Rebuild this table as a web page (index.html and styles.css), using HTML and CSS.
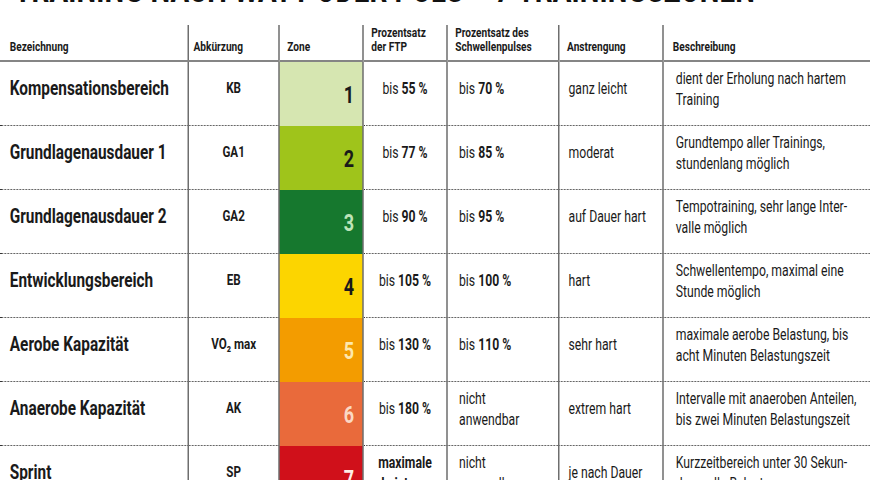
FILE: index.html
```html
<!DOCTYPE html>
<html lang="de">
<head>
<meta charset="utf-8">
<title>Trainingszonen</title>
<link rel="stylesheet" href="styles.css">
</head>
<body>
<div class="sheet">
<h1 class="title">TRAINING NACH WATT ODER PULS – 7 TRAININGSZONEN</h1>
<table class="zones">
  <colgroup>
    <col class="c-name"><col class="c-abbr"><col class="c-zone"><col class="c-ftp"><col class="c-puls"><col class="c-effort"><col class="c-desc">
  </colgroup>
  <thead>
    <tr>
      <th class="h-name">Bezeichnung</th>
      <th class="h-abbr">Abkürzung</th>
      <th>Zone</th>
      <th>Prozentsatz<br>der FTP</th>
      <th>Prozentsatz des<br>Schwellenpulses</th>
      <th>Anstrengung</th>
      <th class="h-desc">Beschreibung</th>
    </tr>
  </thead>
  <tbody>
    <tr>
      <td class="name">Kompensationsbereich</td>
      <td class="abbr">KB</td>
      <td class="zone z1">1</td>
      <td class="ftp">bis <b>55 %</b></td>
      <td class="puls">bis <b>70 %</b></td>
      <td class="effort">ganz leicht</td>
      <td class="desc">dient der Erholung nach hartem<br>Training</td>
    </tr>
    <tr>
      <td class="name">Grundlagenausdauer 1</td>
      <td class="abbr">GA1</td>
      <td class="zone z2">2</td>
      <td class="ftp">bis <b>77 %</b></td>
      <td class="puls">bis <b>85 %</b></td>
      <td class="effort">moderat</td>
      <td class="desc">Grundtempo aller Trainings,<br>stundenlang möglich</td>
    </tr>
    <tr>
      <td class="name">Grundlagenausdauer 2</td>
      <td class="abbr">GA2</td>
      <td class="zone z3">3</td>
      <td class="ftp">bis <b>90 %</b></td>
      <td class="puls">bis <b>95 %</b></td>
      <td class="effort">auf Dauer hart</td>
      <td class="desc">Tempotraining, sehr lange Inter-<br>valle möglich</td>
    </tr>
    <tr>
      <td class="name">Entwicklungsbereich</td>
      <td class="abbr">EB</td>
      <td class="zone z4">4</td>
      <td class="ftp">bis <b>105 %</b></td>
      <td class="puls">bis <b>100 %</b></td>
      <td class="effort">hart</td>
      <td class="desc">Schwellentempo, maximal eine<br>Stunde möglich</td>
    </tr>
    <tr>
      <td class="name">Aerobe Kapazität</td>
      <td class="abbr">VO₂ max</td>
      <td class="zone z5">5</td>
      <td class="ftp">bis <b>130 %</b></td>
      <td class="puls">bis <b>110 %</b></td>
      <td class="effort">sehr hart</td>
      <td class="desc">maximale aerobe Belastung, bis<br>acht Minuten Belastungszeit</td>
    </tr>
    <tr>
      <td class="name">Anaerobe Kapazität</td>
      <td class="abbr">AK</td>
      <td class="zone z6">6</td>
      <td class="ftp">bis <b>180 %</b></td>
      <td class="puls">nicht<br>anwendbar</td>
      <td class="effort">extrem hart</td>
      <td class="desc">Intervalle mit anaeroben Anteilen,<br>bis zwei Minuten Belastungszeit</td>
    </tr>
    <tr>
      <td class="name">Sprint</td>
      <td class="abbr">SP</td>
      <td class="zone z7">7</td>
      <td class="ftp"><b>maximale</b><br><b>Leistung</b></td>
      <td class="puls">nicht<br>anwendbar</td>
      <td class="effort">je nach Dauer</td>
      <td class="desc">Kurzzeitbereich unter 30 Sekun-<br>den, volle Belastung</td>
    </tr>
  </tbody>
</table>
</div>
</body>
</html>
```

FILE: styles.css
```css
html, body {
  margin: 0;
  padding: 0;
  background: #ffffff;
}

body {
  font-family: Roboto, "Liberation Sans", sans-serif;
  color: #1a1a1a;
  overflow: hidden;
  width: 880px;
  height: 480px;
}

/* the print original uses a condensed face: the whole sheet is laid out
   wide and squeezed horizontally to emulate it */
.sheet {
  width: 1160px;
  transform: scaleX(0.75);
  transform-origin: 0 0;
}

.title {
  margin: -29px 0 17px 19px;
  font-size: 37px;
  line-height: 37px;
  letter-spacing: 0.2px;
  font-weight: 700;
  white-space: nowrap;
  color: #111;
}

.zones {
  border-collapse: collapse;
  table-layout: fixed;
  width: 1160px;
}

.c-name { width: 251px; }
.c-abbr { width: 121px; }
.c-zone { width: 112px; }
.c-ftp { width: 112px; }
.c-puls { width: 149px; }
.c-effort { width: 139px; }
.c-desc { width: 276px; }

th {
  height: 28px;
  padding: 0 0 7px 10px;
  text-align: left;
  vertical-align: bottom;
  font-size: 13.5px;
  line-height: 14px;
  font-weight: 700;
  border-left: 2px solid #6e6e6e;
  border-bottom: 2px solid #858585;
}

th.h-name {
  border-left: none;
  padding-left: 13px;
}

th.h-abbr { padding-left: 6px; }
th.h-desc { padding-left: 12px; }

td {
  height: 53px;
  padding: 0 0 10px 0;
  vertical-align: middle;
  border-left: 2px solid #6e6e6e;
  border-bottom: 1px dotted #333;
  font-size: 16.3px;
  line-height: 21px;
  white-space: nowrap;
}

td.name {
  border-left: none;
  padding-left: 13px;
  font-size: 20.5px;
  font-weight: 700;
}

td.abbr {
  text-align: center;
  font-size: 15.5px;
  font-weight: 700;
}

td.ftp { text-align: center; }
td.puls { padding-left: 15px; }
td.effort { padding-left: 12px; }
td.desc { padding-left: 16px; }

td.zone {
  padding: 4px 11px 0 0;
  text-align: right;
  font-size: 24px;
  font-weight: 700;
  border-bottom: none;
}

.z1 { background: #d6e6b1; color: #1a1a1a; }
.z2 { background: #9fc41b; color: #1a1a1a; }
.z3 { background: #16782e; color: #bfe4b8; }
.z4 { background: #fcd500; color: #1a1a1a; }
.z5 { background: #f39c00; color: #fde8ae; }
.z6 { background: #e96a3b; color: #fbd8c4; }
.z7 { background: #d0101a; color: #ffeee6; }
```
